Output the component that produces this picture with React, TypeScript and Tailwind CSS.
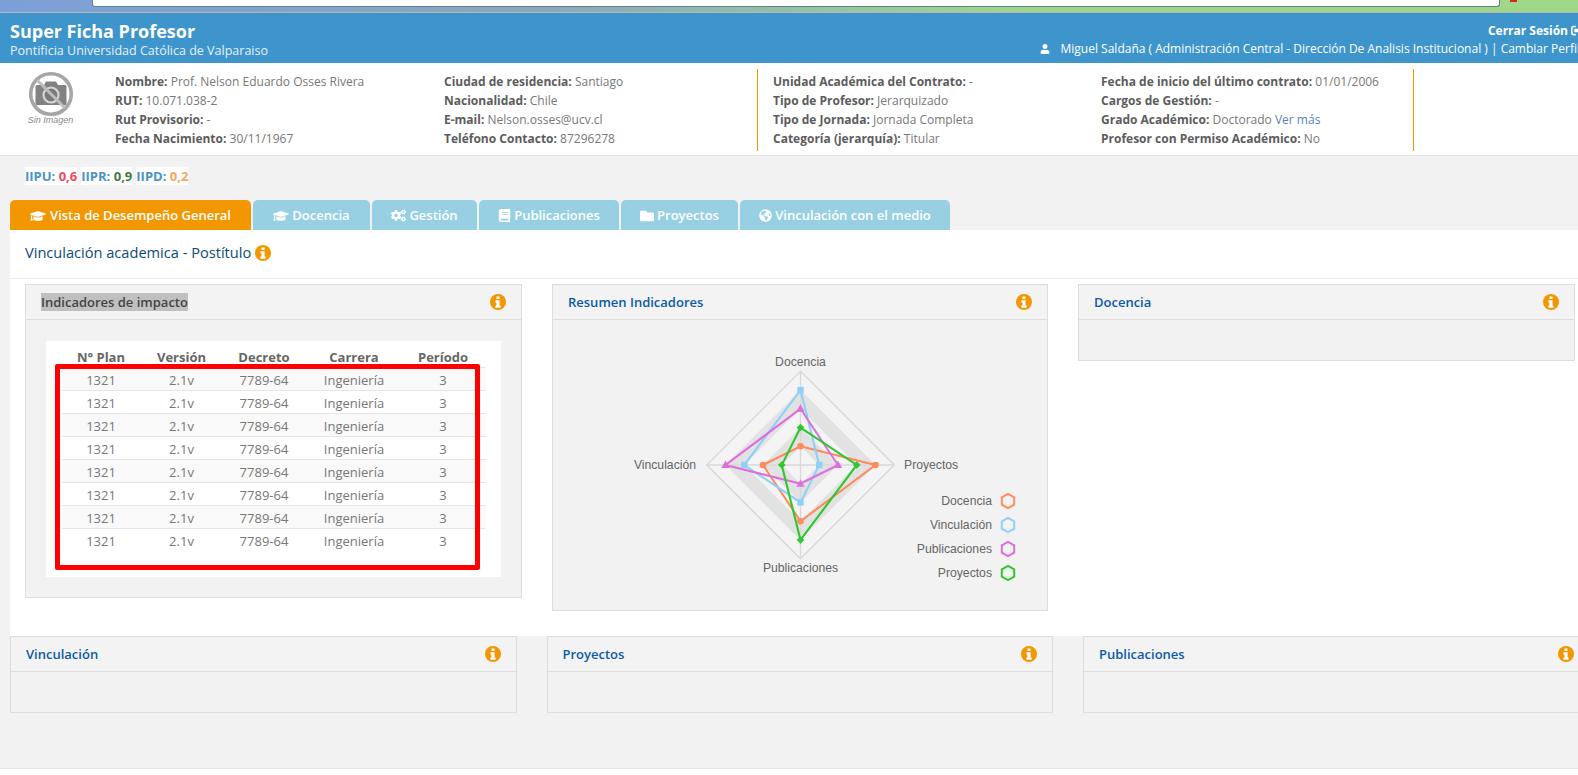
import { FaGraduationCap, FaCogs, FaBook, FaFolder, FaGlobeAmericas, FaUser, FaSignOutAlt } from "react-icons/fa";

const C = 93.7 / 5;
const cx = 247.5;
const cy = 145;
const pt = (r: number[]) =>
  [
    [cx, cy - r[0] * C],
    [cx + r[1] * C, cy],
    [cx, cy + r[2] * C],
    [cx - r[3] * C, cy],
  ] as number[][];
const diamond = (n: number) => pt([n, n, n, n]).map((p) => p.join(",")).join(" ");
const series = [
  { c: "#ff8a5c", v: [1, 4, 3, 2], m: "circle" },
  { c: "#8fd0fa", v: [4, 1, 2, 3], m: "square" },
  { c: "#dd6fdc", v: [3, 2, 1, 4], m: "triangle" },
  { c: "#2fc72f", v: [2, 3, 4, 1], m: "diamond" },
];
const legend = [
  { t: "Docencia", c: "#ff8a5c" },
  { t: "Vinculación", c: "#8fd0fa" },
  { t: "Publicaciones", c: "#dd6fdc" },
  { t: "Proyectos", c: "#2fc72f" },
];

function Marker({ x, y, c, m }: { x: number; y: number; c: string; m: string }) {
  if (m === "circle") return <circle cx={x} cy={y} r={3.3} fill={c} />;
  if (m === "square") return <rect x={x - 3.2} y={y - 3.2} width={6.4} height={6.4} fill={c} />;
  if (m === "triangle") return <polygon points={`${x},${y - 4.5} ${x + 4.2},${y + 3} ${x - 4.2},${y + 3}`} fill={c} />;
  return <polygon points={`${x},${y - 3.8} ${x + 3.8},${y} ${x},${y + 3.8} ${x - 3.8},${y}`} fill={c} />;
}

function Radar() {
  const lab = { fontFamily: "'Liberation Sans', Arial, sans-serif", fontSize: 12.2, fill: "#666" };
  return (
    <svg width="494" height="290" viewBox="0 0 494 290" className="block">
      <polygon points={diamond(5)} fill="#f4f4f4" stroke="#d8d8d8" strokeWidth="1.4" />
      <polygon points={diamond(4)} fill="#e2e2e2" />
      <polygon points={diamond(3)} fill="#f4f4f4" />
      <polygon points={diamond(2)} fill="#e2e2e2" />
      <polygon points={diamond(1)} fill="#f4f4f4" />
      <line x1={cx} y1={cy - 93.7} x2={cx} y2={cy + 93.7} stroke="#d8d8d8" strokeWidth="1.4" />
      <line x1={cx - 93.7} y1={cy} x2={cx + 93.7} y2={cy} stroke="#d8d8d8" strokeWidth="1.4" />
      {series.map((s) => (
        <polygon key={s.c} points={pt(s.v).map((p) => p.join(",")).join(" ")} fill="none" stroke={s.c} strokeWidth="2.1" />
      ))}
      {series.map((s) => pt(s.v).map((p, i) => <Marker key={s.c + i} x={p[0]} y={p[1]} c={s.c} m={s.m} />))}
      <text x={cx} y={46} textAnchor="middle" style={lab}>Docencia</text>
      <text x={143} y={149} textAnchor="end" style={lab}>Vinculación</text>
      <text x={351} y={149} style={lab}>Proyectos</text>
      <text x={cx} y={252} textAnchor="middle" style={lab}>Publicaciones</text>
      {legend.map((l, i) => {
        const y = 181 + i * 24;
        const x = 455;
        return (
          <g key={l.t}>
            <text x={439} y={y + 4} textAnchor="end" style={lab}>{l.t}</text>
            <polygon
              points={`${x},${y - 7.2} ${x + 6.2},${y - 3.6} ${x + 6.2},${y + 3.6} ${x},${y + 7.2} ${x - 6.2},${y + 3.6} ${x - 6.2},${y - 3.6}`}
              fill="none"
              stroke={l.c}
              strokeWidth="2"
            />
          </g>
        );
      })}
    </svg>
  );
}

function Logo() {
  return (
    <div className="w-[115px] shrink-0 flex flex-col items-center pr-[14px] pt-[2px]">
      <svg width="46" height="46" viewBox="0 0 46 46">
        <circle cx="23" cy="23" r="20.3" fill="none" stroke="#a6a6a6" strokeWidth="3.6" />
        <path d="M9 14h7l2-3.5h10l2 3.5h7a1.5 1.5 0 0 1 1.5 1.5v17a1.5 1.5 0 0 1-1.5 1.5H9a1.5 1.5 0 0 1-1.5-1.5v-17A1.5 1.5 0 0 1 9 14z" fill="#828282" />
        <circle cx="23" cy="24" r="7.5" fill="#7a7a7a" stroke="#d6d6d6" strokeWidth="2.2" />
        <line x1="9" y1="9" x2="37" y2="37" stroke="#bdbdbd" strokeWidth="3" />
      </svg>
      <span className="text-[9px] italic leading-[10px] text-[#8a8a8a] mt-[-2px] font-['Liberation_Sans',sans-serif]">Sin Imagen</span>
    </div>
  );
}

function Line({ k, v, link }: { k: string; v: string; link?: string }) {
  return (
    <div className="h-[19px] leading-[19px] whitespace-nowrap">
      <b className="font-bold text-[#5c5c5c]">{k}</b> <span className="text-[#777]">{v}</span>
      {link ? <span className="text-[#5b7fb8]"> {link}</span> : null}
    </div>
  );
}

function Info() {
  return (
    <svg width="16" height="16" viewBox="0 0 16 16" className="shrink-0">
      <circle cx="8" cy="8" r="8" fill="#f39700" />
      <rect x="6.4" y="2.4" width="3.2" height="2.6" rx="0.4" fill="#fff" />
      <path d="M5.4 6.3h4.2v5.2h1v2.2H5.4v-2.2h1V8.5h-1z" fill="#fff" />
    </svg>
  );
}

function PanelHead({ title }: { title: string }) {
  return (
    <div className="h-[35px] bg-[#f3f3f3] border-b border-[#dddddd] flex items-center justify-between pl-[15px] pr-[15px]">
      <span className="text-[13px] font-semibold text-[#0b5aa5] pt-[1px]">{title}</span>
      <Info />
    </div>
  );
}

const tabs = [
  { t: "Docencia", w: "w-[117px]", i: <FaGraduationCap className="text-[16px]" /> },
  { t: "Gestión", w: "w-[105px]", i: <FaCogs className="text-[15px]" /> },
  { t: "Publicaciones", w: "w-[140px]", i: <FaBook className="text-[13px]" /> },
  { t: "Proyectos", w: "w-[117px]", i: <FaFolder className="text-[14px]" /> },
  { t: "Vinculación con el medio", w: "w-[210px]", i: <FaGlobeAmericas className="text-[13px]" /> },
];

const cols = ["w-[78px]", "w-[83px]", "w-[82px]", "w-[98px]", "w-[80px]"];
const heads = ["N° Plan", "Versión", "Decreto", "Carrera", "Período"];
const vals = ["1321", "2.1v", "7789-64", "Ingeniería", "3"];

export default function App() {
  return (
    <div className="relative w-[1578px] h-[775px] overflow-hidden bg-[#f2f2f2] font-['Open_Sans',sans-serif] text-[12px]">
      {/* browser strip */}
      <div className="relative h-[13px] border-b border-[#b5b5b5] bg-gradient-to-r from-[#7c9fd8] via-[#8ea8b8] via-35% to-[#a0d88a] to-65% pl-[92px] pr-[78px]">
        <div className="h-[7px] bg-white border border-t-0 border-[#5f7f8f] rounded-b-[3px]" />
        <div className="absolute left-[1510px] top-0 w-[7px] h-[2px] bg-[#d8232a]" />
      </div>
      {/* blue header */}
      <div className="h-[50px] bg-[#3d95cc] flex justify-between text-white">
        <div className="pl-[10px] pt-[6px]">
          <div className="text-[18px] leading-[24px] font-bold">Super Ficha Profesor</div>
          <div className="text-[12.5px] leading-[15px] text-[#e6f2fa] whitespace-nowrap">Pontificia Universidad Católica de Valparaiso</div>
        </div>
        <div className="flex flex-col items-end mr-[-2px] pt-[9px]">
          <div className="flex items-center gap-[3px] text-[12px] leading-[17px] font-bold mr-[-6px]">
            Cerrar Sesión <FaSignOutAlt className="text-[13px] mr-[2px]" />
          </div>
          <div className="flex items-center text-[12px] leading-[17px] whitespace-nowrap mt-[1px]">
            <FaUser className="text-[10px] mr-[11px]" />
            Miguel Saldaña ( Administración Central - Dirección De Analisis Institucional ) | Cambiar Perfil
          </div>
        </div>
      </div>
      {/* info */}
      <div className="h-[93px] bg-white border-b border-[#e4e4e4] flex pt-[6px]">
        <Logo />
        <div className="w-[329px] pt-[3px]">
          <Line k="Nombre:" v="Prof. Nelson Eduardo Osses Rivera" />
          <Line k="RUT:" v="10.071.038-2" />
          <Line k="Rut Provisorio:" v="-" />
          <Line k="Fecha Nacimiento:" v="30/11/1967" />
        </div>
        <div className="w-[314px] h-[82px] pt-[3px] border-r border-[#f39700]">
          <Line k="Ciudad de residencia:" v="Santiago" />
          <Line k="Nacionalidad:" v="Chile" />
          <Line k="E-mail:" v="Nelson.osses@ucv.cl" />
          <Line k="Teléfono Contacto:" v="87296278" />
        </div>
        <div className="w-[328px] pl-[15px] pt-[3px]">
          <Line k="Unidad Académica del Contrato:" v="-" />
          <Line k="Tipo de Profesor:" v="Jerarquizado" />
          <Line k="Tipo de Jornada:" v="Jornada Completa" />
          <Line k="Categoría (jerarquía):" v="Titular" />
        </div>
        <div className="w-[328px] h-[82px] pl-[15px] pt-[3px] border-r border-[#f39700]">
          <Line k="Fecha de inicio del último contrato:" v="01/01/2006" />
          <Line k="Cargos de Gestión:" v="-" />
          <Line k="Grado Académico:" v="Doctorado" link="Ver más" />
          <Line k="Profesor con Permiso Académico:" v="No" />
        </div>
      </div>
      {/* badges */}
      <div className="h-[44px] pl-[25px] pt-[11px] flex gap-[4px] text-[13px] font-bold leading-[18px]">
        <span className="bg-white h-[18px] text-[#4a93c9]">IIPU: <span className="text-[#f0475f]">0,6</span></span>
        <span className="bg-white h-[18px] text-[#4a93c9]">IIPR: <span className="text-[#3f7a3f]">0,9</span></span>
        <span className="bg-white h-[18px] text-[#4a93c9]">IIPD: <span className="text-[#f7a860]">0,2</span></span>
      </div>
      {/* tabs */}
      <div className="h-[30px] pl-[10px] flex gap-[2px] text-[13px] font-semibold text-white">
        <div className="w-[241px] bg-[#f39700] rounded-t-[5px] flex items-center justify-center gap-[4px] pt-[1px]">
          <FaGraduationCap className="text-[16px]" /> Vista de Desempeño General
        </div>
        {tabs.map((t) => (
          <div key={t.t} className={`${t.w} bg-[#97d0e2] rounded-t-[5px] flex items-center justify-center gap-[3px] pt-[1px]`}>
            {t.i} {t.t}
          </div>
        ))}
      </div>
      {/* content */}
      <div className="ml-[10px] h-[406px] bg-white">
        <div className="h-[49px] border-b border-[#ececec] pl-[15px] flex items-center gap-[4px] pb-[3px]">
          <span className="text-[14.6px] text-[#0d4a78] font-medium">Vinculación academica - Postítulo</span>
          <Info />
        </div>
        <div className="pt-[5px] pl-[15px] flex items-start gap-[30px]">
          <div className="w-[497px] h-[314px] bg-[#f2f2f2] border border-[#dddddd]">
            <div className="h-[35px] bg-[#f3f3f3] border-b border-[#dddddd] flex items-center justify-between pl-[15px] pr-[15px]">
              <span className="text-[13px] font-semibold text-[#444] bg-[#c0c0c0] leading-[18px]">Indicadores de impacto</span>
              <Info />
            </div>
            <div className="relative ml-[20px] mt-[21px] w-[455px] h-[236px] bg-white">
              <div className="pl-[16px] pt-[6px]">
                <div className="flex w-[424px] h-[21px] text-[13px] font-bold text-[#666] leading-[20px] border-b border-[#e6e6e6]">
                  {heads.map((h, i) => (
                    <div key={h} className={`${cols[i]} text-center`}>{h}</div>
                  ))}
                </div>
                {[0, 1, 2, 3, 4, 5, 6, 7].map((r) => (
                  <div
                    key={r}
                    className={`flex w-[424px] h-[23px] text-[13px] text-[#777] leading-[24px] ${r < 7 ? "border-b border-[#e6e6e6]" : ""} ${r % 2 === 0 ? "bg-[#f9f9f9]" : "bg-white"}`}
                  >
                    {vals.map((v, i) => (
                      <div key={i} className={`${cols[i]} text-center`}>{v}</div>
                    ))}
                  </div>
                ))}
              </div>
              <div className="absolute left-[9px] top-[23px] w-[425px] h-[206px] border-[5px] border-[#ff0000] rounded-[2px]" />
            </div>
          </div>
          <div className="w-[496px] h-[327px] bg-[#f2f2f2] border border-[#dddddd]">
            <PanelHead title="Resumen Indicadores" />
            <Radar />
          </div>
          <div className="w-[497px] h-[77px] bg-[#f2f2f2] border border-[#dddddd]">
            <PanelHead title="Docencia" />
          </div>
        </div>
      </div>
      {/* bottom panels */}
      <div className="pl-[10px] flex gap-[30px]">
        {["Vinculación", "Proyectos", "Publicaciones"].map((t) => (
          <div key={t} className="w-[506.5px] h-[77px] shrink-0 bg-[#f2f2f2] border border-[#dddddd]">
            <PanelHead title={t} />
          </div>
        ))}
      </div>
      {/* footer */}
      <div className="absolute left-0 right-0 top-[768px] bottom-0 bg-white border-t border-[#e4e7ea]" />
    </div>
  );
}
